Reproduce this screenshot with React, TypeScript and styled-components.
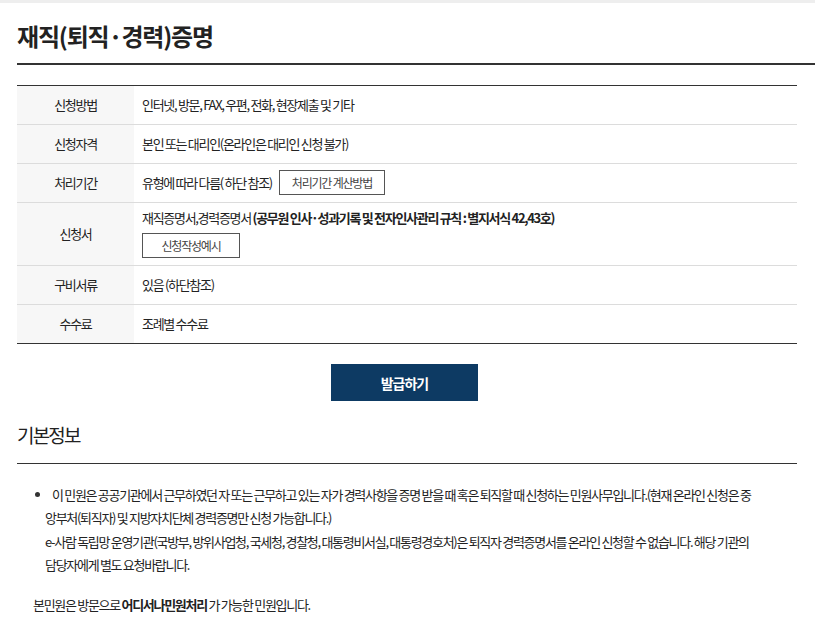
import React from 'react'
import styled, { createGlobalStyle } from 'styled-components'

const GlobalStyle = createGlobalStyle`
  body {
    margin: 0;
    background: #fff;
    font-family: "Noto Sans CJK KR", "Noto Sans", sans-serif;
    color: #333;
  }
`

const Page = styled.div`
  width: 815px;
  border-top: 3px solid #eeeeee;
  padding-left: 17px;
  box-sizing: border-box;
`

const Title = styled.h2`
  margin: 0;
  padding-top: 17px;
  height: 43px;
  font-size: 24px;
  font-weight: 700;
  line-height: 32px;
  letter-spacing: -1.2px;
  color: #222;
  border-bottom: 2px solid #333;
`

const Content = styled.div`
  padding-right: 18px;
`

const InfoTable = styled.div`
  margin-top: 20px;
  border-top: 1px solid #333;
  border-bottom: 1px solid #333;
`

const Row = styled.div<{ $tall?: boolean }>`
  display: grid;
  grid-template-columns: 117px 1fr;
  min-height: ${p => (p.$tall ? '62px' : '38px')};
  border-bottom: 1px solid #dcdcdc;
  &:last-child {
    border-bottom: none;
  }
`

const Label = styled.div`
  display: flex;
  align-items: center;
  justify-content: center;
  padding-bottom: 2px;
  background: #f7f7f7;
  font-size: 13px;
  letter-spacing: -1.3px;
  color: #222;
`

const Value = styled.div`
  display: flex;
  flex-direction: column;
  justify-content: center;
  align-items: flex-start;
  gap: 6px;
  padding: 0 8px 2px;
  font-size: 13px;
  letter-spacing: -1.3px;
  color: #222;
`

const Inline = styled.div`
  display: flex;
  align-items: center;
  gap: 7px;
`

const Strong = styled.b`
  font-weight: 700;
  color: #222;
`

const OutlineButton = styled.button<{ $width: number }>`
  width: ${p => p.$width}px;
  height: 25px;
  padding: 0;
  border: 1px solid #555;
  background: #fff;
  font-family: inherit;
  font-size: 12px;
  letter-spacing: -1.2px;
  color: #444;
  cursor: pointer;
`

const ButtonBar = styled.div`
  display: flex;
  justify-content: center;
  margin-top: 20px;
  padding-right: 5px;
`

const IssueButton = styled.button`
  width: 147px;
  height: 37px;
  border: none;
  background: #0d3a63;
  color: #fff;
  font-family: inherit;
  font-size: 14px;
  font-weight: 700;
  letter-spacing: -1px;
  cursor: pointer;
`

const SectionTitle = styled.h3`
  margin: 0;
  padding-top: 21px;
  height: 41px;
  font-size: 19px;
  font-weight: 400;
  line-height: 26px;
  letter-spacing: -1.8px;
  color: #222;
  border-bottom: 1px solid #333;
`

const List = styled.ul`
  margin: 0;
  padding: 19px 0 0 28px;
  list-style: none;
`

const Item = styled.li`
  position: relative;
  font-size: 13px;
  line-height: 23.3px;
  letter-spacing: -1.3px;
  color: #222;
  &::before {
    content: '';
    position: absolute;
    left: -10px;
    top: 9px;
    width: 5px;
    height: 5px;
    border-radius: 50%;
    background: #333;
  }
`

const Lead = styled.span`
  padding-left: 7px;
`

const Note = styled.p`
  margin: 17px 0 0 16px;
  font-size: 13px;
  line-height: 23px;
  letter-spacing: -1.3px;
  color: #222;
`

const rows = [
  { label: '신청방법', text: '인터넷, 방문, FAX, 우편, 전화, 현장제출 및 기타' },
  { label: '신청자격', text: '본인 또는 대리인(온라인은 대리인 신청 불가)' },
]

export default function App() {
  return (
    <Page>
      <GlobalStyle />
      <Title>재직(퇴직·경력)증명</Title>
      <Content>
        <InfoTable>
          {rows.map(r => (
            <Row key={r.label}>
              <Label>{r.label}</Label>
              <Value>{r.text}</Value>
            </Row>
          ))}
          <Row>
            <Label>처리기간</Label>
            <Value>
              <Inline>
                <span>유형에 따라 다름( 하단 참조)</span>
                <OutlineButton $width={106}>처리기간 계산방법</OutlineButton>
              </Inline>
            </Value>
          </Row>
          <Row $tall>
            <Label>신청서</Label>
            <Value>
              <span>
                재직증명서,경력증명서 <Strong>(공무원 인사·성과기록 및 전자인사관리 규칙 : 별지서식 42,43호)</Strong>
              </span>
              <OutlineButton $width={98}>신청작성예시</OutlineButton>
            </Value>
          </Row>
          <Row>
            <Label>구비서류</Label>
            <Value>있음 (하단참조)</Value>
          </Row>
          <Row>
            <Label>수수료</Label>
            <Value>조례별 수수료</Value>
          </Row>
        </InfoTable>

        <ButtonBar>
          <IssueButton>발급하기</IssueButton>
        </ButtonBar>

        <SectionTitle>기본정보</SectionTitle>

        <List>
          <Item>
            <Lead>이 민원은 공공기관에서 근무하였던 자 또는 근무하고 있는 자가 경력사항을 증명 받을 때 혹은 퇴직할 때 신청하는 민원사무입니다.(현재 온라인 신청은 중</Lead>
            <br />
            앙부처(퇴직자) 및 지방자치단체 경력증명만 신청 가능합니다.)
            <br />
            e-사람 독립망 운영기관(국방부, 방위사업청, 국세청, 경찰청, 대통령비서실, 대통령경호처)은 퇴직자 경력증명서를 온라인 신청할 수 없습니다. 해당 기관의
            <br />
            담당자에게 별도 요청바랍니다.
          </Item>
        </List>

        <Note>
          본민원은 방문으로 <Strong>어디서나민원처리</Strong> 가 가능한 민원입니다.
        </Note>
      </Content>
    </Page>
  )
}
